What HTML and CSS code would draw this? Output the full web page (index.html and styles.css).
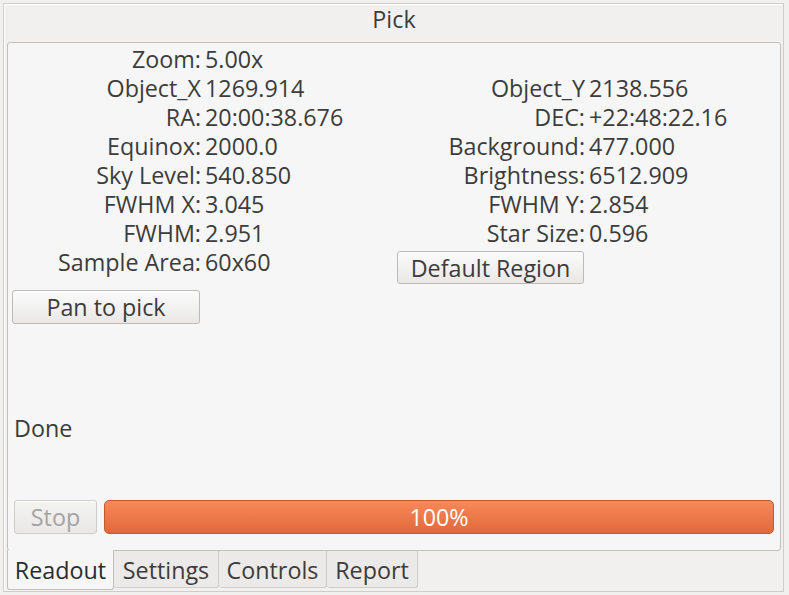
FILE: index.html
```html
<!DOCTYPE html>
<html>
<head>
<meta charset="utf-8">
<link rel="stylesheet" href="styles.css">
</head>
<body>
<div class="window">
  <div class="title">Pick</div>
  <div class="panel">
    <div class="grid">
      <div class="lbl">Zoom:</div><div class="val">5.00x</div><div></div><div></div>
      <div class="lbl">Object_X</div><div class="val">1269.914</div><div class="lbl">Object_Y</div><div class="val">2138.556</div>
      <div class="lbl">RA:</div><div class="val">20:00:38.676</div><div class="lbl">DEC:</div><div class="val">+22:48:22.16</div>
      <div class="lbl">Equinox:</div><div class="val">2000.0</div><div class="lbl">Background:</div><div class="val">477.000</div>
      <div class="lbl">Sky Level:</div><div class="val">540.850</div><div class="lbl">Brightness:</div><div class="val">6512.909</div>
      <div class="lbl">FWHM X:</div><div class="val">3.045</div><div class="lbl">FWHM Y:</div><div class="val">2.854</div>
      <div class="lbl">FWHM:</div><div class="val">2.951</div><div class="lbl">Star Size:</div><div class="val">0.596</div>
      <div class="lbl">Sample Area:</div><div class="val">60x60</div><div class="btncell"><button class="btn region">Default Region</button></div><div></div>
    </div>
    <button class="btn pan">Pan to pick</button>
    <div class="status">Done</div>
    <div class="bottom">
      <button class="btn stop" disabled>Stop</button>
      <div class="progress">100%</div>
    </div>
  </div>
  <div class="tabs">
    <div class="tab active">Readout</div>
    <div class="tab">Settings</div>
    <div class="tab">Controls</div>
    <div class="tab">Report</div>
  </div>
</div>
</body>
</html>
```
FILE: styles.css
```css
html, body {
  margin: 0;
  padding: 0;
  background: #f1f0ef;
}
body {
  font-family: "Open Sans", "Noto Sans", sans-serif;
  font-size: 23.3px;
  color: #3c3c3c;
  padding: 3px 0 0 3px;
  width: 789px;
  height: 595px;
  box-sizing: border-box;
}
.window {
  width: 781px;
  height: 589px;
  box-sizing: border-box;
  border: 1px solid #cfcdca;
  box-shadow: inset 1px 1px 0 #ffffff;
  padding: 0 2px 0 3px;
  display: flex;
  flex-direction: column;
}
.title {
  height: 38px;
  line-height: 30px;
  text-align: center;
  flex: none;
}
.panel {
  height: 509px;
  box-sizing: border-box;
  border: 1px solid #c2c0bd;
  border-radius: 3px;
  background: #f6f6f6;
  display: flex;
  flex-direction: column;
  flex: none;
}
.grid {
  display: grid;
  grid-template-columns: 193px 188px 188px 1fr;
  column-gap: 4px;
  grid-auto-rows: 29px;
  margin-top: 2px;
  line-height: 29px;
}
.lbl {
  text-align: right;
  white-space: nowrap;
}
.val {
  white-space: nowrap;
}
.btncell {
  padding-top: 3px;
}
.btn {
  font: inherit;
  color: #3c3c3c;
  border: 1px solid #bdbbb8;
  border-radius: 3px;
  background: linear-gradient(#fbfbfb, #e9e8e7);
  box-shadow: inset 0 1px 0 #ffffff;
  padding: 0;
  margin: 0;
  box-sizing: border-box;
  line-height: 30px;
}
.region {
  width: 187px;
  height: 33px;
  text-align: center;
}
.pan {
  width: 188px;
  height: 34px;
  margin: 13px 0 0 4px;
}
.status {
  margin: 89px 0 0 6px;
  line-height: 30px;
}
.bottom {
  display: flex;
  gap: 7px;
  margin: 57px 0 0 6px;
  padding-right: 6px;
}
.stop {
  width: 83px;
  height: 34px;
  color: #a3a3a3;
  background: linear-gradient(#f3f3f2, #e9e8e7);
  border-color: #cfcdca;
}
.progress {
  flex: 1;
  height: 34px;
  box-sizing: border-box;
  border: 1px solid #c45a2c;
  border-radius: 5px;
  background: linear-gradient(#f8895a, #e2683a);
  color: #ffffff;
  text-align: center;
  line-height: 32px;
}
.tabs {
  display: flex;
  align-items: flex-start;
  height: 40px;
  flex: none;
}
.tab {
  box-sizing: border-box;
  height: 37px;
  line-height: 38px;
  border: 1px solid #cfcdca;
  border-top: none;
  border-left: none;
  border-radius: 0 0 3px 3px;
  background: #ebeae8;
  text-align: center;
}
.tab:nth-child(2) { width: 105px; }
.tab:nth-child(3) { width: 108px; }
.tab:nth-child(4) { width: 91px; }
.tab.active {
  width: 107px;
  height: 40px;
  margin-top: -1px;
  border-left: 1px solid #c2c0bd;
  border-color: #c2c0bd;
  background: #f6f6f6;
  line-height: 40px;
  color: #2c2c2c;
}
```
